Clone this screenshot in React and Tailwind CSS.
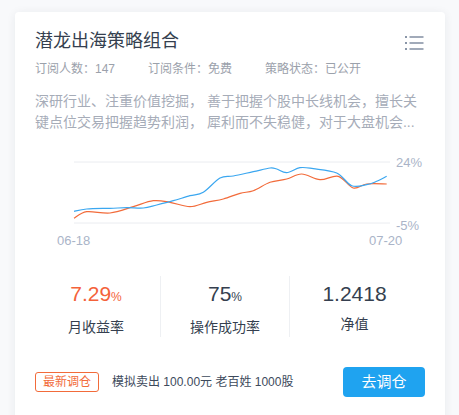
import React from "react";

const blue = [[74,212.3],[86.7,210],[110,209.3],[126.7,208.7],[143.3,209],[156.7,206],[173.3,201.7],[190,196.7],[203.3,193.3],[220,179],[233.3,177],[253.3,172.7],[270,169],[276.7,170],[286.7,173.7],[300,168.7],[313.3,169.7],[336.7,174],[351.7,186.7],[366.7,185.7],[376.7,182.3],[386.7,177.3]];
const orange = [[74,219.3],[86.7,212.7],[110,214],[133.3,207.7],[153.3,201.7],[170,203.3],[190,207.7],[206.7,203.3],[223.3,200],[240,194.3],[253.3,191.7],[270,183.3],[286.7,180],[301.7,175],[320,180.7],[338.3,177.3],[353.3,189],[366.7,185],[386.7,185]];

function smooth(pts) {
  let d = `M${pts[0][0]},${pts[0][1]}`;
  for (let i = 0; i < pts.length - 1; i++) {
    const p0 = pts[i - 1] || pts[i];
    const p1 = pts[i];
    const p2 = pts[i + 1];
    const p3 = pts[i + 2] || p2;
    const t = 6;
    const c1x = p1[0] + (p2[0] - p0[0]) / t;
    const c1y = p1[1] + (p2[1] - p0[1]) / t;
    const c2x = p2[0] - (p3[0] - p1[0]) / t;
    const c2y = p2[1] - (p3[1] - p1[1]) / t;
    d += ` C${c1x.toFixed(1)},${c1y.toFixed(1)} ${c2x.toFixed(1)},${c2y.toFixed(1)} ${p2[0]},${p2[1]}`;
  }
  return d;
}

const font = { fontFamily: '"Liberation Sans","Noto Sans CJK SC",Arial,sans-serif' };

export default function App() {
  return (
    <div className="w-[459px] h-[415px] overflow-hidden bg-[#f8f9fb]" style={font}>
      <div className="ml-[15px] mt-[12px] w-[430px] h-[420px] bg-white rounded-[4px] shadow-[0_1px_10px_rgba(30,40,60,0.07)] flex flex-col">
        <div className="flex items-start justify-between pl-5 pr-5 pt-4">
          <div className="text-[18px] leading-[26px] text-[#353f4f]">潜龙出海策略组合</div>
          <svg width="20" height="16" viewBox="0 0 20 16" className="mt-[7px]">
            <g fill="#8a96a8">
              <rect x="0" y="1" width="2" height="2" />
              <rect x="0" y="7" width="2" height="2" />
              <rect x="0" y="13" width="2" height="2" />
              <rect x="4.5" y="1.2" width="14" height="1.6" />
              <rect x="4.5" y="7.2" width="14" height="1.6" />
              <rect x="4.5" y="13.2" width="14" height="1.6" />
            </g>
          </svg>
        </div>
        <div className="flex pl-5 mt-[6px] text-[12px] leading-[18px] text-[#9ba1ab]">
          <span className="w-[113px]">订阅人数：147</span>
          <span className="w-[117px]">订阅条件：免费</span>
          <span>策略状态：已公开</span>
        </div>
        <div className="px-5 mt-[13px] text-[14px] leading-[21px] text-[#a6acb8]">
          <div className="whitespace-nowrap">深研行业、注重价值挖掘， 善于把握个股中长线机会，擅长关</div>
          <div className="whitespace-nowrap">键点位交易把握趋势利润， 犀利而不失稳健，对于大盘机会...</div>
        </div>
        <svg width="430" height="110" viewBox="15 145 430 110" className="mt-[11px] block">
          <line x1="74" y1="163" x2="390" y2="163" stroke="#eaecf0" strokeWidth="1" />
          <line x1="74" y1="224" x2="390" y2="224" stroke="#eaecf0" strokeWidth="1" />
          <text x="396" y="168" fontSize="13" fill="#aab4c8" style={font}>24%</text>
          <text x="396" y="230.5" fontSize="13" fill="#aab4c8" style={font}>-5%</text>
          <text x="57" y="246" fontSize="13" fill="#aab4c8" style={font}>06-18</text>
          <text x="369" y="246" fontSize="13" fill="#aab4c8" style={font}>07-20</text>
          <path d={smooth(orange)} fill="none" stroke="#f26b3a" strokeWidth="1.2" />
          <path d={smooth(blue)} fill="none" stroke="#3ba7f0" strokeWidth="1.2" />
        </svg>
        <div className="mt-[22px] ml-[17px] flex">
          <div className="w-[129px] flex flex-col items-center pt-[4px] border-r border-[#eef0f3]">
            <div className="text-[21px] leading-[28px] text-[#f4623a]">7.29<span className="text-[12px]">%</span></div>
            <div className="mt-[6px] text-[14px] leading-[20px] text-[#353f4f]">月收益率</div>
          </div>
          <div className="w-[129px] flex flex-col items-center pt-[4px] border-r border-[#eef0f3]">
            <div className="text-[21px] leading-[28px] text-[#353f4f]">75<span className="text-[12px]">%</span></div>
            <div className="mt-[6px] text-[14px] leading-[20px] text-[#353f4f]">操作成功率</div>
          </div>
          <div className="w-[129px] flex flex-col items-center pt-[4px]">
            <div className="text-[21px] leading-[28px] text-[#353f4f]">1.2418</div>
            <div className="mt-[6px] text-[14px] leading-[20px] text-[#353f4f]">净值</div>
          </div>
        </div>
        <div className="mt-[30px] pl-5 pr-5 flex items-center">
          <span className="h-[20px] px-[7px] border border-[#f26b3a] rounded-[3px] text-[12px] leading-[18px] text-[#f26b3a]">最新调仓</span>
          <span className="ml-[13px] text-[12px] text-[#3d4a5c]">模拟卖出 100.00元 老百姓 1000股</span>
          <button className="ml-auto w-[82px] h-[30px] rounded-[4px] bg-[#1fa3f0] text-white text-[15px]">去调仓</button>
        </div>
      </div>
    </div>
  );
}
